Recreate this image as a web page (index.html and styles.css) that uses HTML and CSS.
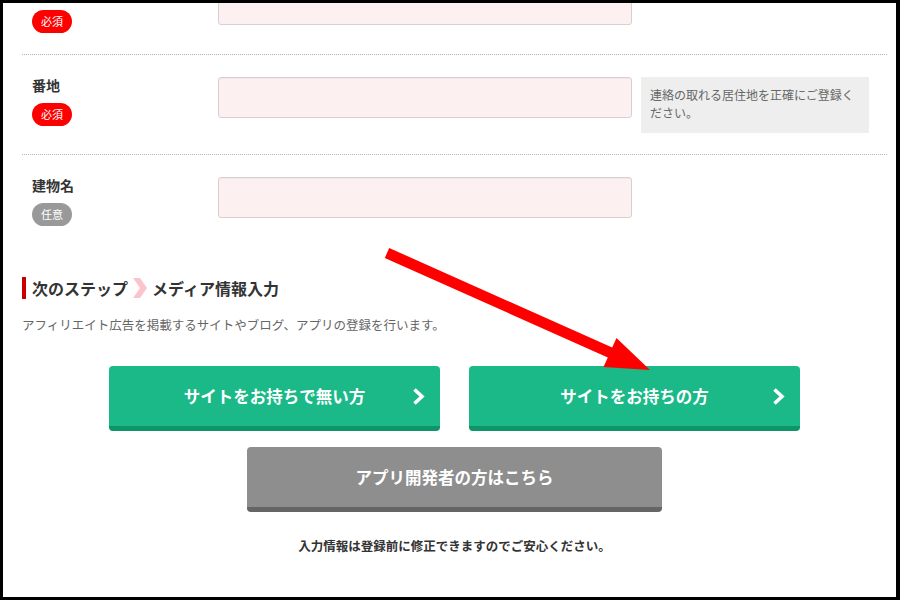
FILE: index.html
```html
<!DOCTYPE html>
<html lang="ja">
<head>
  <meta charset="utf-8">
  <title>会員登録 - 住所入力</title>
  <link rel="stylesheet" href="styles.css">
</head>
<body>
  <div class="frame">
    <div class="page">
      <div class="fields">
        <div class="row">
          <div class="lab">
            <div class="lab-name"></div>
            <span class="badge req">必須</span>
          </div>
          <input class="inp" type="text" name="city">
        </div>
        <div class="row">
          <div class="lab">
            <div class="lab-name">番地</div>
            <span class="badge req">必須</span>
          </div>
          <input class="inp" type="text" name="address">
          <p class="hint">連絡の取れる居住地を正確にご登録ください。</p>
        </div>
        <div class="row last">
          <div class="lab">
            <div class="lab-name">建物名</div>
            <span class="badge opt">任意</span>
          </div>
          <input class="inp" type="text" name="building">
        </div>
      </div>

      <h3 class="step">
        次のステップ
        <svg class="step-arrow" width="14" height="20" viewBox="0 0 14 20"><polygon points="0,0 7,0 14,10 7,20 0,20 7,10" fill="#fbc4cd"/></svg>
        メディア情報入力
      </h3>
      <p class="desc">アフィリエイト広告を掲載するサイトやブログ、アプリの登録を行います。</p>

      <div class="btns">
        <a class="btn green" href="#">
          <span class="btn-text">サイトをお持ちで無い方</span>
          <svg class="chev" width="13" height="19" viewBox="0 0 13 19"><polyline points="2.5,2.5 10,9.5 2.5,16.5" fill="none" stroke="#fff" stroke-width="3.6"/></svg>
        </a>
        <a class="btn green" href="#">
          <span class="btn-text">サイトをお持ちの方</span>
          <svg class="chev" width="13" height="19" viewBox="0 0 13 19"><polyline points="2.5,2.5 10,9.5 2.5,16.5" fill="none" stroke="#fff" stroke-width="3.6"/></svg>
        </a>
      </div>
      <a class="btn gray" href="#">アプリ開発者の方はこちら</a>

      <p class="note">入力情報は登録前に修正できますのでご安心ください。</p>
    </div>

    <!-- annotation arrow drawn over the page -->
    <svg class="mark" width="900" height="600" viewBox="0 0 900 600">
      <polygon points="389.2,248 612.2,347.5 616.5,337.9 650,370 603.5,367.1 607.8,357.5 384.8,258" fill="#fe0000"/>
    </svg>
  </div>
</body>
</html>
```

FILE: styles.css
```css
body {
  margin: 0;
  font-family: "Noto Sans CJK JP", "Noto Sans", sans-serif;
  color: #333;
}

.frame {
  position: relative;
  width: 900px;
  height: 600px;
  box-sizing: border-box;
  border: solid #000;
  border-width: 3px 4px 3px 3px;
  overflow: hidden;
  background: #fff;
}

.page {
  padding: 0 9px 0 19px;
}

.fields {
  margin-top: -41px;
}

.row {
  display: grid;
  grid-template-columns: 177px 414px 228px;
  column-gap: 9px;
  align-items: start;
  padding: 21px 0 21px 10px;
  border-bottom: 1px dotted #b5b5b5;
}
.row.last {
  border-bottom: none;
}

.lab-name {
  height: 18px;
  font-size: 14px;
  font-weight: bold;
  line-height: 18px;
}

.badge {
  display: block;
  margin-top: 9px;
  width: 40px;
  height: 23px;
  border-radius: 12px;
  color: #fff;
  font-size: 11px;
  line-height: 23px;
  text-align: center;
}
.req {
  background: #fe0000;
}
.opt {
  background: #999;
}

.inp {
  display: block;
  margin: 1px 0 0;
  width: 414px;
  height: 41px;
  box-sizing: border-box;
  border: 1px solid #d8d0d0;
  border-radius: 3px;
  background: #fdf0f0;
  box-shadow: inset 0 1px 1px rgba(0,0,0,0.04);
}

.hint {
  margin: 1px 0 0;
  padding: 9px 9px 11px;
  background: #eee;
  color: #666;
  font-size: 12px;
  line-height: 18px;
}

.step {
  display: flex;
  align-items: center;
  margin: 30px 0 0;
  height: 22px;
  padding-left: 6px;
  border-left: 4px solid #c80000;
  font-size: 16px;
  line-height: 22px;
}
.step-arrow {
  margin: 0 5px 0 5px;
}

.desc {
  margin: 17px 0 0;
  color: #666;
  font-size: 12.5px;
  line-height: 18px;
}

.btns {
  display: flex;
  justify-content: center;
  gap: 29px;
  margin-top: 32px;
}

.btn {
  display: grid;
  box-sizing: border-box;
  height: 65px;
  border-radius: 4px;
  color: #fff;
  font-size: 16.5px;
  font-weight: bold;
  text-decoration: none;
}
.green {
  width: 331px;
  grid-template-columns: 1fr auto 1fr;
  align-items: center;
  padding: 0 15px 0;
  background: #1ab987;
  border-bottom: 5px solid #0e9467;
}
.green .btn-text {
  grid-column: 2;
}
.green .chev {
  grid-column: 3;
  justify-self: end;
}
.gray {
  width: 415px;
  margin: 16px auto 0;
  place-items: center;
  background: #8e8e8e;
  border-bottom: 5px solid #656565;
}

.note {
  margin: 25px 0 0;
  text-align: center;
  font-size: 12.5px;
  font-weight: bold;
  line-height: 18px;
}

.mark {
  position: absolute;
  left: -3px;
  top: -3px;
}
```
